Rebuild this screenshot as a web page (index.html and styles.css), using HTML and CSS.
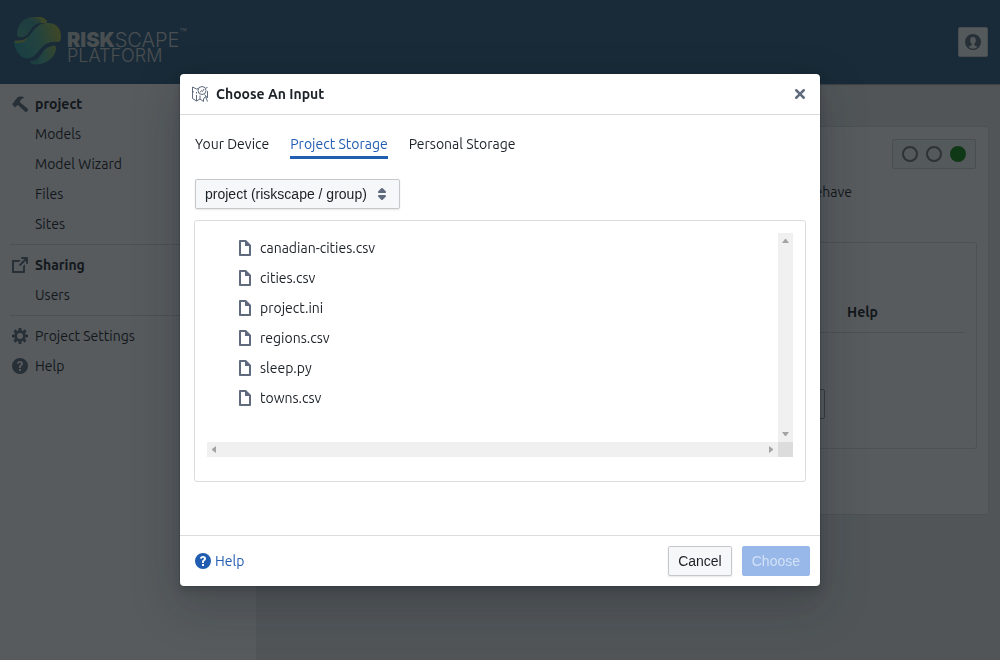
FILE: index.html
```html
<!DOCTYPE html>
<html lang="en">
<head>
<meta charset="utf-8">
<title>RiskScape Platform</title>
<link rel="stylesheet" href="styles.css">
</head>
<body>
<svg class="defs" width="0" height="0" aria-hidden="true">
  <symbol id="doc" viewBox="0 0 16 16"><path d="M9 0H3c-.55 0-1 .45-1 1v14c0 .55.45 1 1 1h10c.55 0 1-.45 1-1V5L9 0zm3 14H4V2h4v4h4v8z"/></symbol>
  <symbol id="help" viewBox="0 0 16 16"><path fill-rule="evenodd" d="M8 0a8 8 0 100 16A8 8 0 008 0zM7 11h2v2H7zM5 5.600C5 3.900 6.200 3 8 3s3 .9 3 2.500c0 1.200-.7 1.800-1.300 2.300-.5.400-.8.700-.8 1.200v1H7V8.800c0-1 .6-1.600 1.200-2.100.5-.4.800-.7.800-1.200 0-.4-.3-.7-1-.7s-1.100.3-1.200.9z"/></symbol>
</svg>
<div class="app">
  <header class="topbar">
    <a class="brand" href="#" aria-label="RiskScape Platform">
      <svg class="brand-mark" viewBox="0 0 48 48" aria-hidden="true">
        <defs>
          <linearGradient id="band" gradientUnits="userSpaceOnUse" x1="0" y1="30" x2="48" y2="16"><stop offset="0" stop-color="#2f9fa6"/><stop offset=".5" stop-color="#4fae98"/><stop offset="1" stop-color="#b5bf3c"/></linearGradient>
          <linearGradient id="top" x1="0" y1="1" x2="1" y2="0"><stop offset="0" stop-color="#4fa894"/><stop offset=".6" stop-color="#3f9c9a"/><stop offset="1" stop-color="#a5b84a"/></linearGradient>
        </defs>
        <path fill="url(#top)" d="M3 18C3 8 9 0 20 0c6-1 11 1 13 4 1 3-4 2-7 2-7 1-9 7-13 12-4 3-9 3-10 0z"/>
        <path fill="#a5b84a" d="M20 0c6-1 11 1 13 4 1 3-3 2-7 2 3-2 0-5-6-6z"/>
        <path fill="url(#band)" d="M0 24c3-1 10 1 15-5C21 12 24 6 34 6c9 0 13 6 13 14 0 3-1 5-3 5-14-2-17 8-24 14-4 3-9 3-12 1-5-4-8-10-8-16z"/>
        <path fill="#a5b84a" d="M0 24c3-1 9 1 14-4-1 5-8 6-12 6z"/>
        <path fill="url(#band)" d="M16 44c12 1 10-13 22-15 3-1 4 0 4 2 0 8-8 15-16 16-5 1-10 0-10-3z"/>
        <path fill="#3c9d96" d="M16 44c4 0 7 0 9-3 1 3 0 5-3 6-3 0-6-1-6-3z"/>
      </svg>
      <span class="brand-text"><span class="brand-name"><b>RISK</b>SCAPE<small>™</small></span><span class="brand-sub">PLATFORM</span></span>
    </a>
    <button class="user" type="button" aria-label="Account">
      <svg class="icon" viewBox="0 0 16 16"><path fill-rule="evenodd" d="M8 0a8 8 0 100 16A8 8 0 008 0zM3.500 12.800c.8-.9 2.300-1 3-1.600.4-.4.300-1.200 0-1.600-.9-.8-1.300-1.800-1.300-3.300C5.200 4.200 6.200 3 8 3s2.800 1.200 2.800 3.300c0 1.500-.4 2.500-1.300 3.300-.3.400-.4 1.200 0 1.600.7.600 2.200.7 3 1.600A6.500 6.500 0 018 14.700a6.500 6.500 0 01-4.500-1.900z"/></svg>
    </button>
  </header>
  <div class="columns">
    <nav class="sidebar">
      <ul class="group">
        <li><a class="strong" href="#"><svg class="icon" viewBox="0 0 16 16"><path d="M15.400 12.500L8 6.200c.1-1.300.6-2.300 1.800-3.200L12.500 1.600C10 .2 7 0 5 2L2.600 5c-.5.600-.5 1.300-1 1.700L0 8l3 3.500 1.500-1.400c.3-.5.800-.9 1.400-1.100l7 6.500c.7.600 1.500.6 2.200 0l.5-.6c.6-.8.500-1.700-.2-2.400z"/></svg>project</a></li>
        <li><a href="#">Models</a></li>
        <li><a href="#">Model Wizard</a></li>
        <li><a href="#">Files</a></li>
        <li><a href="#">Sites</a></li>
      </ul>
      <ul class="group">
        <li><a class="strong" href="#"><svg class="icon" viewBox="0 0 16 16"><path d="M11 14H2V5h4.800l2-2H1c-.55 0-1 .45-1 1v11c0 .55.45 1 1 1h11c.55 0 1-.45 1-1V7.200l-2 2zM15 0h-5a1 1 0 000 2h2.600L7.300 7.300a1 1 0 001.400 1.400L14 3.400V6a1 1 0 002 0V1c0-.55-.45-1-1-1z"/></svg>Sharing</a></li>
        <li><a href="#">Users</a></li>
      </ul>
      <ul class="group">
        <li><a href="#"><svg class="icon" viewBox="0 0 16 16"><path d="M15.190 6.390h-1.850c-.11-.37-.27-.71-.45-1.040l1.360-1.360c.31-.31.31-.82 0-1.130l-1.130-1.130c-.31-.31-.82-.31-1.130 0l-1.360 1.360c-.33-.17-.67-.33-1.040-.44V.79c0-.44-.36-.8-.8-.8h-1.600c-.44 0-.8.36-.8.8v1.860c-.39.12-.75.28-1.100.47l-1.300-1.300c-.3-.3-.79-.3-1.090 0L1.820 2.910c-.3.3-.3.79 0 1.090l1.300 1.300c-.2.34-.36.7-.48 1.090H.79c-.44 0-.8.36-.8.8v1.600c0 .44.36.8.8.8h1.850c.11.37.27.71.45 1.040l-1.360 1.360c-.31.31-.31.82 0 1.130l1.130 1.130c.31.31.82.31 1.130 0l1.360-1.360c.33.18.67.33 1.040.44v1.860c0 .44.36.8.8.8h1.600c.44 0 .8-.36.8-.8v-1.860c.39-.12.75-.28 1.100-.47l1.300 1.300c.3.3.79.3 1.090 0l1.090-1.090c.3-.3.3-.79 0-1.090l-1.300-1.300c.19-.35.36-.71.48-1.100h1.850c.44 0 .8-.36.8-.8v-1.600a.816.816 0 00-.81-.79zM8 11a3 3 0 110-6 3 3 0 010 6z"/></svg>Project Settings</a></li>
        <li><a href="#"><svg class="icon"><use href="#help"/></svg>Help</a></li>
      </ul>
    </nav>
    <main class="main">
      <section class="card">
        <div class="lights"><i></i><i></i><i class="on"></i></div>
        <p class="summary">behave</p>
        <div class="card inner">
          <table class="params">
            <thead><tr><th></th><th>Help</th></tr></thead>
            <tbody><tr><td><input class="field" type="text" aria-label="Input"></td><td></td></tr></tbody>
          </table>
        </div>
      </section>
    </main>
  </div>
</div>
<div class="overlay">
  <div class="dialog" role="dialog" aria-modal="true" aria-labelledby="dialog-title">
    <header class="dialog-head">
      <svg class="icon outline" viewBox="0 0 16 16"><path d="M6 2.500L4.500 3 .5 1v11.500l4 2.500L8 13l3.500 2.500V13l2-2.500 2 5M4.500 6v1.500M4.500 9v6M8 9.500V13M.5 5.500L2 6M12.500 8.500l3 3.500V5M14 2l1.500-.5"/><circle cx="10" cy="4.500" r="4"/><path d="M8 6.500l1.500-2 1 1L12 3"/></svg>
      <h2 id="dialog-title">Choose An Input</h2>
      <button class="close" type="button" aria-label="Close"><svg viewBox="0 0 16 16"><path d="M9.410 8l2.290-2.290c.19-.18.3-.43.3-.71a1.003 1.003 0 00-1.710-.71L8 6.590l-2.290-2.300a1.003 1.003 0 00-1.420 1.420L6.590 8 4.300 10.290c-.19.18-.3.43-.3.710a1.003 1.003 0 001.710.71L8 9.410l2.290 2.290c.18.19.43.3.71.3a1.003 1.003 0 00.71-1.710L9.410 8z"/></svg></button>
    </header>
    <div class="dialog-body">
      <div class="tabs" role="tablist">
        <button type="button" role="tab">Your Device</button>
        <button type="button" role="tab" aria-selected="true">Project Storage</button>
        <button type="button" role="tab">Personal Storage</button>
      </div>
      <div class="select">
        <select aria-label="Storage location"><option>project (riskscape / group)</option></select>
        <svg class="icon" viewBox="0 0 16 16"><path d="M5 7h6a1.003 1.003 0 00.71-1.710l-3-3C8.530 2.110 8.280 2 8 2s-.53.11-.71.29l-3 3A1.003 1.003 0 005 7zm6 2H5a1.003 1.003 0 00-.71 1.710l3 3c.18.18.43.29.71.29s.53-.11.71-.29l3-3A1.003 1.003 0 0011 9z"/></svg>
      </div>
      <div class="files">
        <div class="viewport">
          <ul class="tree">
            <li><svg class="icon"><use href="#doc"/></svg>canadian-cities.csv</li>
            <li><svg class="icon"><use href="#doc"/></svg>cities.csv</li>
            <li><svg class="icon"><use href="#doc"/></svg>project.ini</li>
            <li><svg class="icon"><use href="#doc"/></svg>regions.csv</li>
            <li><svg class="icon"><use href="#doc"/></svg>sleep.py</li>
            <li><svg class="icon"><use href="#doc"/></svg>towns.csv</li>
          </ul>
          <div class="track vertical">
            <svg width="7" height="4"><path d="M3 0h1l3 4H0z"/></svg>
            <svg width="7" height="4"><path d="M0 0h7L4 4H3z"/></svg>
          </div>
          <div class="track">
            <svg width="4" height="7"><path d="M0 3v1l4 3V0z"/></svg>
            <svg width="4" height="7"><path d="M0 0v7l4-3V3z"/></svg>
          </div>
          <div class="corner"></div>
        </div>
      </div>
    </div>
    <footer class="dialog-foot">
      <a class="help" href="#"><svg class="icon"><use href="#help"/></svg>Help</a>
      <button class="btn" type="button">Cancel</button>
      <button class="btn primary" type="button" disabled>Choose</button>
    </footer>
  </div>
</div>
</body>
</html>
```
FILE: styles.css
```css
* { box-sizing: border-box; }
body {
  margin: 0;
  color: #1c2127;
  font: 14px/18px Ubuntu, "Noto Sans", sans-serif;
}
ul { list-style: none; margin: 0; padding: 0; }
a { color: inherit; text-decoration: none; }
button, select, input { font: 14px/18px "Liberation Sans", Arial, sans-serif; color: inherit; }
.defs { position: absolute; }
.icon { width: 16px; height: 16px; flex: none; fill: #5f6b7c; }

.app { min-height: 100vh; display: flex; flex-direction: column; background: #ebecec; }
.topbar {
  height: 84px;
  display: flex;
  align-items: center;
  justify-content: space-between;
  padding: 0 12px 0 14px;
  background: #305f80;
  box-shadow: 0 1px 1px rgba(17, 20, 24, .3);
}
.brand { display: flex; align-items: flex-start; gap: 5px; padding-bottom: 2px; color: #d0d2d4; }
.brand-mark { width: 48px; height: 48px; }
.brand-text { display: flex; flex-direction: column; padding-top: 15px; font-family: Inter, "Open Sans", sans-serif; font-weight: 300; }
.brand-name { display: flex; font-size: 20px; line-height: 16px; }
.brand-name b { font-weight: 900; }
.brand-name small { font-size: 12px; line-height: 12px; margin-top: -5px; }
.brand-sub { font-size: 18px; line-height: 16px; }
.user {
  width: 30px;
  height: 30px;
  display: grid;
  place-items: center;
  padding: 0;
  border: 1px solid #cfd1d4;
  border-radius: 2px;
  background: #f6f7f9;
}

.columns { flex: 1; display: flex; }
.sidebar { width: 256px; padding: 5px 10px; background: #fff; }
.group + .group { margin-top: 5px; padding-top: 5px; border-top: 1px solid #dcdcdd; }
.group a { display: flex; align-items: center; gap: 7px; height: 30px; padding-left: 25px; }
.group a:has(.icon) { padding-left: 2px; }
.strong { font-weight: 700; }
.main { flex: 1; padding: 42px 11px 0 12px; }
.card {
  border: 1px solid #dcdcdd;
  border-radius: 3px;
  background: #fff;
  padding: 12px 11px 65px;
}
.lights {
  width: 84px;
  height: 30px;
  margin: 0 1px 0 auto;
  display: flex;
  align-items: center;
  justify-content: center;
  gap: 8px;
  border: 1px solid #d0d2d4;
  border-radius: 2px;
  background: #f6f7f9;
}
.lights i { width: 16px; height: 16px; border: 2px solid #777; border-radius: 50%; }
.lights .on { background: #0f8a0f; border-color: #0f8a0f; }
.summary { margin: 14px 125px 41px 0; text-align: right; }
.inner { padding: 49px 11px 15px; }
.params { width: 100%; border-collapse: collapse; table-layout: fixed; }
.params th { height: 40px; padding: 0; text-align: left; border-bottom: 1px solid #dcdcdd; }
.params th:last-child { width: 118px; }
.params td { height: 101px; padding: 56px 22px 0 0; text-align: right; vertical-align: top; }
.field { display: block; width: 180px; height: 30px; margin-left: auto; border: 1px solid #999; border-radius: 2px; background: #fff; }

.overlay {
  position: fixed;
  inset: 0;
  display: flex;
  align-items: center;
  justify-content: center;
  background: rgba(16, 22, 26, .7);
}
.dialog {
  width: 640px;
  max-width: 100%;
  border-radius: 4px;
  background: #fff;
  box-shadow: 0 0 0 1px rgba(17, 20, 24, .1), 0 4px 8px rgba(17, 20, 24, .2), 0 18px 46px 6px rgba(17, 20, 24, .2);
}
.dialog-head {
  display: flex;
  align-items: center;
  gap: 8px;
  padding: 5px 5px 5px 12px;
  border-bottom: 1px solid #dcdcdd;
}
.dialog-head h2 { flex: 1; margin: 0; font-size: 14px; line-height: 18px; }
.outline { fill: none; stroke: #5f6b7c; }
.close { width: 30px; height: 30px; display: grid; place-items: center; padding: 0; border: 0; background: none; }
.close svg { width: 20px; height: 20px; fill: #5f6b7c; }
.dialog-body { padding: 14px 14px 53px; }
.tabs { display: flex; gap: 21px; padding-left: 1px; }
.tabs button {
  height: 30px;
  padding: 2px 0 0;
  border: 0;
  border-bottom: 3px solid transparent;
  background: none;
  font-family: Ubuntu, "Noto Sans", sans-serif;
}
.tabs [aria-selected] { color: #215db0; border-color: #215db0; }
.select { position: relative; width: 205px; margin: 20px 1px 11px; }
.select select {
  appearance: none;
  width: 100%;
  height: 30px;
  padding: 0 25px 0 9px;
  border: 1px solid #c5c7ca;
  border-radius: 2px;
  background: #f6f7f9;
  box-shadow: 0 1px 2px rgba(17, 20, 24, .1);
}
.select .icon { position: absolute; right: 10px; top: 7px; pointer-events: none; }
.files { padding: 12px 12px 24px; border: 1px solid #dcdcdd; border-radius: 3px; }
.viewport { display: grid; grid-template: 209px 15px / 1fr 15px; }
.tree { padding-left: 30px; }
.tree li { display: flex; align-items: center; gap: 7px; height: 30px; }
.track { display: flex; justify-content: space-between; align-items: center; padding: 0 5px; background: #f0f0f0; }
.track.vertical { flex-direction: column; padding: 6px 0; }
.track svg { fill: #a3a3a3; }
.corner { background: #dcdcdc; }
.dialog-foot {
  display: flex;
  align-items: center;
  gap: 10px;
  padding: 10px 10px 10px 15px;
  border-top: 1px solid #dcdcdd;
}
.help { display: flex; align-items: center; gap: 4px; margin-right: auto; color: #215db0; }
.help .icon { fill: #215db0; }
.btn {
  height: 30px;
  padding: 0 9px;
  border: 1px solid #c5c7ca;
  border-radius: 2px;
  background: #f6f7f9;
  box-shadow: 0 1px 2px rgba(17, 20, 24, .1);
}
.primary { border-color: #97b8e8; background: #97b8e8; color: #d3e1f6; box-shadow: none; }
```
